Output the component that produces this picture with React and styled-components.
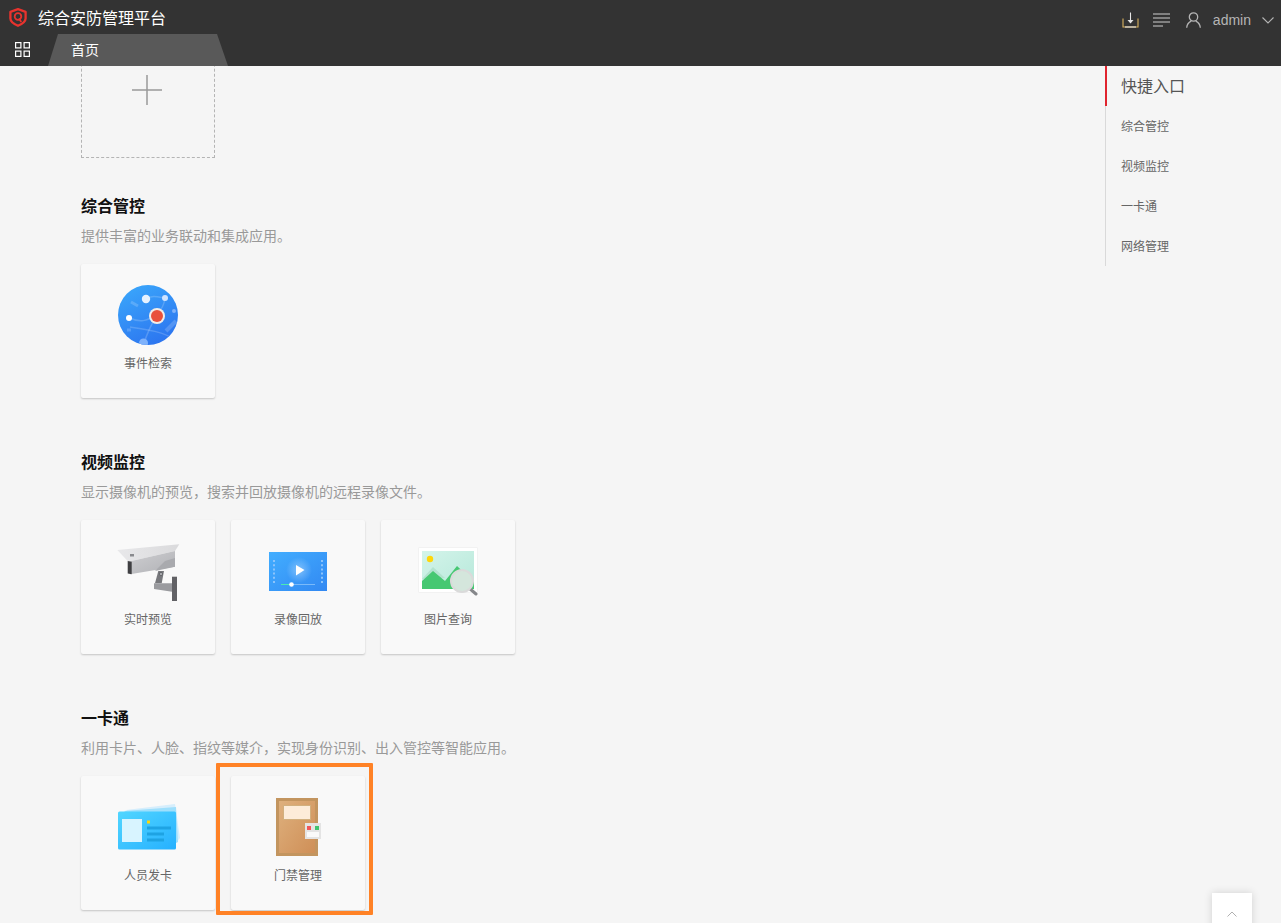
import React from "react";
import styled, { createGlobalStyle } from "styled-components";

const GlobalStyle = createGlobalStyle`
    html, body {
        margin: 0;
        height: 100%;
        overflow: hidden;
        background: #f5f5f5;
    }
    body {
        font-family: "Liberation Sans", "Noto Sans CJK SC", sans-serif;
    }
    * {
        box-sizing: border-box;
    }
`;

function BrandIcon() {
    return (
        <svg width="18" height="19" viewBox="0 0 18 19">
            <path
                d="M9 1.200 16.600 3.800V10.500C16.600 13.800 13 16 9 17.800 5 16 1.400 13.800 1.400 10.500V3.800Z"
                fill="none"
                stroke="#e8332e"
                strokeWidth="2.300"
                strokeLinejoin="round"
            />
            <circle cx="9" cy="8.500" r="3.300" fill="none" stroke="#e8332e" strokeWidth="1.800" />
            <path d="M10 10.500 12.300 14" stroke="#e8332e" strokeWidth="1.800" />
        </svg>
    );
}

function GridIcon() {
    return (
        <svg width="15" height="15" viewBox="0 0 15 15" fill="none" stroke="#fff" strokeWidth="1.200">
            <rect x=".6" y=".6" width="5.300" height="5.300" />
            <rect x="9.100" y=".6" width="5.300" height="5.300" />
            <rect x=".6" y="9.100" width="5.300" height="5.300" />
            <rect x="9.100" y="9.100" width="5.300" height="5.300" />
        </svg>
    );
}

function DownloadIcon() {
    return (
        <svg width="17" height="16" viewBox="0 0 17 16" fill="none">
            <path d="M1 6.500V15H16V6.500" stroke="#d9b25f" strokeWidth="1.100" />
            <path d="M3 15H14" stroke="#e6e6e6" strokeWidth="1.100" />
            <path d="M8.500 .5V10.500" stroke="#e6e6e6" strokeWidth="1.100" />
            <path d="M5.500 8 8.500 11.500 11.500 8Z" fill="#e6e6e6" />
        </svg>
    );
}

function ListIcon() {
    return (
        <svg width="17" height="14" viewBox="0 0 17 14" stroke="#cfcfcf" strokeWidth="1">
            <path d="M0 1H17" />
            <path d="M0 5H17" />
            <path d="M0 9H17" />
            <path d="M0 13H10" />
        </svg>
    );
}

function UserIcon() {
    return (
        <svg width="15" height="16" viewBox="0 0 15 16" fill="none" stroke="#b5b5b5" strokeWidth="1.300">
            <circle cx="7.500" cy="5" r="4.200" />
            <path d="M.7 15.800C1 12 3.500 10 5.200 9.200M14.300 15.800C14 12 11.500 10 9.800 9.200" />
        </svg>
    );
}

function ChevronIcon() {
    return (
        <svg width="12" height="7" viewBox="0 0 12 7" fill="none" stroke="#b5b5b5" strokeWidth="1.100">
            <path d="M.5 .5 6 6 11.500 .5" />
        </svg>
    );
}

function EventIcon() {
    return (
        <svg width="60" height="60" viewBox="0 0 60 60">
            <defs>
                <linearGradient id="eventBlue" x1="0.2" y1="0" x2="0.7" y2="1">
                    <stop offset="0" stopColor="#3aa6fb" />
                    <stop offset="1" stopColor="#2c74ef" />
                </linearGradient>
                <clipPath id="eventClip">
                    <circle cx="30" cy="30" r="30" />
                </clipPath>
            </defs>
            <circle cx="30" cy="30" r="30" fill="url(#eventBlue)" />
            <g clipPath="url(#eventClip)" fill="none" stroke="#fff" strokeOpacity=".18" strokeWidth="1.500">
                <path d="M12 33C22 38 28 36 39 30" />
                <path d="M28 14C34 10 40 12 47 13" />
                <path d="M47 13C46 22 42 26 39 30 34 38 30 46 26 58" />
                <path d="M12 42C26 44 44 46 60 56" />
                <path d="M13 17 20 21" strokeWidth="3" />
                <path d="M48 46 58 36" strokeWidth="4" />
                <path d="M9 45H13" strokeWidth="3" />
            </g>
            <g clipPath="url(#eventClip)">
                <circle cx="28" cy="14" r="4.200" fill="#e6f2ff" />
                <circle cx="47" cy="13" r="3" fill="#cfe3ff" />
                <circle cx="11" cy="33" r="3" fill="#fff" />
                <circle cx="56" cy="26" r="2" fill="#7fb2fb" />
                <circle cx="25.500" cy="58" r="4.500" fill="#7fb2fb" />
                <circle cx="39" cy="31" r="8" fill="#f1ece8" />
                <circle cx="39" cy="31" r="6" fill="#e8503c" />
            </g>
        </svg>
    );
}

function CameraIcon() {
    return (
        <svg width="66" height="62" viewBox="-2 -3 66 62">
            <defs>
                <linearGradient id="camBody" x1="0" y1="0" x2="1" y2="1">
                    <stop offset="0" stopColor="#cfcfd2" />
                    <stop offset="1" stopColor="#b0b1b5" />
                </linearGradient>
                <linearGradient id="camHood" x1="0" y1="0" x2="1" y2="0">
                    <stop offset="0" stopColor="#e8e8ea" />
                    <stop offset="1" stopColor="#dadadc" />
                </linearGradient>
            </defs>
            <path d="M.3 7 62.300 1.300 58 8 11.300 18.700Z" fill="url(#camHood)" />
            <path d="M11.300 18.700 58 8V23.700L13 31.300Z" fill="url(#camBody)" />
            <path d="M10.700 18 14.700 18.700V31.300L10.700 30.500Z" fill="#3f3f42" />
            <path d="M38 28 48 18 58 15V23.700Z" fill="#a9aaae" />
            <path d="M41.300 28H47L44.700 40.300H38Z" fill="#77787c" />
            <path d="M37 40.300H55V48.700L37 46Z" fill="#9a9b9f" />
            <rect x="55" y="33.700" width="5" height="24.300" fill="#616165" />
            <circle cx="44" cy="31" r="1.600" fill="#b0b1b5" stroke="#55565a" strokeWidth=".7" />
            <rect x="13" y="11" width="4" height="2.500" fill="#8a8b8f" />
        </svg>
    );
}

function VideoIcon() {
    return (
        <svg width="58" height="39" viewBox="0 0 58 39">
            <defs>
                <linearGradient id="videoBlue" x1="0" y1="0" x2="1" y2="1">
                    <stop offset="0" stopColor="#42aeff" />
                    <stop offset="1" stopColor="#3288f2" />
                </linearGradient>
                <radialGradient id="videoGlow">
                    <stop offset="0" stopColor="#fff" stopOpacity=".35" />
                    <stop offset="1" stopColor="#fff" stopOpacity="0" />
                </radialGradient>
            </defs>
            <rect width="58" height="39" fill="url(#videoBlue)" />
            <circle cx="30" cy="18" r="13" fill="url(#videoGlow)" />
            <path d="M27 13 35.500 18 27 23.500Z" fill="#fff" />
            <path d="M5 8V32M53 8V32" stroke="#8cc4fb" strokeWidth="2" strokeDasharray="2 2.200" />
            <path d="M12 32.500H46" stroke="#8cc4fb" strokeWidth=".8" />
            <path d="M12 32.500H22" stroke="#3cf5a0" strokeWidth=".8" />
            <circle cx="22.500" cy="32.500" r="2.300" fill="#fff" />
        </svg>
    );
}

function PictureIcon() {
    return (
        <svg width="60" height="50" viewBox="-1 -2 60 50">
            <defs>
                <linearGradient id="picSky" x1="0" y1="0" x2="1" y2="1">
                    <stop offset="0" stopColor="#d3f4ea" />
                    <stop offset="1" stopColor="#b7e8da" />
                </linearGradient>
            </defs>
            <rect x="-.5" y="-.5" width="59" height="45" fill="#ececec" />
            <rect x="0" y="0" width="58" height="44" fill="#fff" />
            <rect x="3" y="3" width="52" height="38" fill="url(#picSky)" />
            <circle cx="11" cy="11" r="3.200" fill="#ffd60a" />
            <path d="M3 31 14 19 26 30Z" fill="#b3e3cf" />
            <path d="M3 41V33L14 23 26 33 38 18 55 34V41Z" fill="#46c872" />
            <path d="M50 40 57 46" stroke="#85878a" strokeWidth="3" strokeLinecap="round" />
            <circle cx="43" cy="33" r="11" fill="#d4e6dc" stroke="#dadada" strokeWidth="2" />
        </svg>
    );
}

function CardIcon() {
    return (
        <svg width="66" height="47" viewBox="-3 0 66 47">
            <defs>
                <linearGradient id="cardBlue" x1="0" y1="0" x2="1" y2="1">
                    <stop offset="0" stopColor="#52d6ff" />
                    <stop offset="1" stopColor="#25b0ff" />
                </linearGradient>
            </defs>
            <path d="M8 6 57 0 62 34 57 40Z" fill="#d6eefc" />
            <path d="M6 7 58 3 60 38 56 40Z" fill="#9edffc" />
            <rect x="0" y="7.500" width="58" height="38" rx="1.500" fill="url(#cardBlue)" />
            <rect x="4" y="15" width="20" height="23" fill="#d8f4ff" />
            <rect x="29" y="16.500" width="3" height="3" fill="#ffd60a" />
            <rect x="29" y="22.500" width="24" height="3" fill="#1ea3e3" />
            <rect x="29" y="28.500" width="17" height="3" fill="#1ea3e3" />
            <rect x="29" y="34.500" width="17" height="3" fill="#1ea3e3" />
        </svg>
    );
}

function DoorIcon() {
    return (
        <svg width="46" height="58" viewBox="-1 0 46 58">
            <defs>
                <linearGradient id="doorWood" x1="0" y1="0" x2="1" y2="1">
                    <stop offset="0" stopColor="#deb07d" />
                    <stop offset="1" stopColor="#cf8f57" />
                </linearGradient>
            </defs>
            <rect x="0" y="0" width="42" height="58" fill="#c3955f" />
            <rect x="3" y="3" width="36" height="52" fill="url(#doorWood)" />
            <rect x="7" y="7" width="28" height="15" fill="#d2b07e" />
            <rect x="8" y="8" width="26" height="13" fill="#fdecd9" />
            <rect x="29" y="25" width="16" height="16" fill="#e4e4e4" />
            <rect x="31" y="28" width="4" height="4" fill="#f0565a" />
            <rect x="39" y="28" width="4" height="4" fill="#3fc46f" />
            <rect x="31" y="34" width="12" height="5" fill="#fafafa" />
        </svg>
    );
}

function AddIcon() {
    return (
        <svg width="30" height="30" viewBox="0 0 30 30" stroke="#999" strokeWidth="1.500">
            <path d="M15 0V30M0 15H30" />
        </svg>
    );
}

const sections = [
    {
        title: "综合管控",
        desc: "提供丰富的业务联动和集成应用。",
        apps: [{ name: "事件检索", icon: <EventIcon /> }],
    },
    {
        title: "视频监控",
        desc: "显示摄像机的预览\uFF0C搜索并回放摄像机的远程录像文件。",
        apps: [
            { name: "实时预览", icon: <CameraIcon /> },
            { name: "录像回放", icon: <VideoIcon /> },
            { name: "图片查询", icon: <PictureIcon /> },
        ],
    },
    {
        title: "一卡通",
        desc: "利用卡片、人脸、指纹等媒介\uFF0C实现身份识别、出入管控等智能应用。",
        apps: [
            { name: "人员发卡", icon: <CardIcon /> },
            { name: "门禁管理", icon: <DoorIcon />, marked: true },
        ],
    },
];

const quickLinks = ["综合管控", "视频监控", "一卡通", "网络管理"];

export default function App() {
    return (
        <Shell>
            <GlobalStyle />
            <Header>
                <TopRow>
                    <Brand>
                        <BrandIcon />
                        <BrandName>综合安防管理平台</BrandName>
                    </Brand>
                    <Tools>
                        <DownloadIcon />
                        <ListIcon />
                        <UserSlot>
                            <UserIcon />
                        </UserSlot>
                        <UserName>admin</UserName>
                        <ChevronIcon />
                    </Tools>
                </TopRow>
                <TabRow>
                    <MenuButton>
                        <GridIcon />
                    </MenuButton>
                    <Tab>首页</Tab>
                </TabRow>
            </Header>
            <Main>
                <Content>
                    <AddCard>
                        <AddIcon />
                    </AddCard>
                    {sections.map((section) => (
                        <Section key={section.title}>
                            <SectionTitle>{section.title}</SectionTitle>
                            <SectionDesc>{section.desc}</SectionDesc>
                            <CardRow>
                                {section.apps.map((app) => (
                                    <AppCard key={app.name}>
                                        <IconSlot>{app.icon}</IconSlot>
                                        <AppName>{app.name}</AppName>
                                        {app.marked && <Marker />}
                                    </AppCard>
                                ))}
                            </CardRow>
                        </Section>
                    ))}
                </Content>
                <QuickNav>
                    <QuickItem $active>快捷入口</QuickItem>
                    {quickLinks.map((link) => (
                        <QuickItem key={link}>{link}</QuickItem>
                    ))}
                </QuickNav>
                <BackTop>
                    <svg width="10" height="6" viewBox="0 0 10 6" fill="none" stroke="#b0b0b0" strokeWidth="1">
                        <path d="M.5 5.500 5 1 9.500 5.500" />
                    </svg>
                </BackTop>
            </Main>
        </Shell>
    );
}

const Shell = styled.div`
    display: flex;
    flex-direction: column;
    height: 100vh;
    overflow: hidden;
`;

const Header = styled.header`
    position: relative;
    z-index: 2;
    flex: none;
    height: 66px;
    background: #333333;
`;

const TopRow = styled.div`
    display: flex;
    align-items: center;
    justify-content: space-between;
    height: 34px;
    padding: 0 7px 0 9px;
`;

const Brand = styled.div`
    display: flex;
    align-items: center;
    gap: 11px;
`;

const BrandName = styled.span`
    color: #fff;
    font-size: 16px;
`;

const Tools = styled.div`
    display: flex;
    align-items: center;
    gap: 14px;
    padding-top: 6px;
`;

const UserSlot = styled.div`
    display: flex;
    margin-left: 2px;
`;

const UserName = styled.span`
    margin-left: -2px;
    margin-right: -3px;
    color: #b5b5b5;
    font-size: 14px;
`;

const TabRow = styled.div`
    display: flex;
    height: 32px;
`;

const MenuButton = styled.div`
    display: flex;
    align-items: center;
    justify-content: center;
    width: 45px;
    padding-bottom: 1px;
`;

const Tab = styled.div`
    width: 180px;
    margin-left: 3px;
    padding-left: 23px;
    color: #fff;
    font-size: 14px;
    line-height: 32px;
    background: #595959;
    clip-path: polygon(10px 0, 169px 0, 100% 100%, 0 100%);
`;

const Main = styled.main`
    position: relative;
    flex: 1;
    min-height: 0;
    overflow: hidden;
`;

const Content = styled.div`
    margin-top: -43px;
    padding-left: 81px;
`;

const AddCard = styled.div`
    display: flex;
    align-items: center;
    justify-content: center;
    width: 134px;
    height: 135px;
    padding: 0 2px 2px 0;
    border: 1px dashed #b4b4b4;
`;

const Section = styled.section`
    margin-top: 39px;
    height: 217px;
`;

const SectionTitle = styled.h2`
    margin: 0;
    color: #111;
    font-size: 16px;
    font-weight: 700;
    line-height: 20px;
`;

const SectionDesc = styled.p`
    margin: 9px 0 0;
    color: #999;
    font-size: 14px;
    line-height: 20px;
`;

const CardRow = styled.div`
    display: flex;
    gap: 16px;
    margin-top: 18px;
`;

const AppCard = styled.div`
    position: relative;
    display: flex;
    flex-direction: column;
    align-items: center;
    width: 134px;
    height: 134px;
    background: #f9f9f9;
    border-radius: 2px;
    box-shadow: 0 1px 2px rgba(0, 0, 0, 0.2);
`;

const IconSlot = styled.div`
    display: flex;
    align-items: center;
    justify-content: center;
    height: 62px;
    margin-top: 20px;
`;

const AppName = styled.div`
    margin-top: 8px;
    color: #666;
    font-size: 12px;
    line-height: 20px;
`;

const Marker = styled.div`
    position: absolute;
    top: -13px;
    left: -15px;
    width: 157px;
    height: 152px;
    border: 4px solid #ff8226;
    border-radius: 1px;
`;

const QuickNav = styled.nav`
    position: absolute;
    top: 0;
    left: 1105px;
    width: 120px;
    border-left: 1px solid #d9d9d9;
`;

const QuickItem = styled.div`
    height: 40px;
    margin-left: -1px;
    padding-left: 14px;
    border-left: 2px solid ${(p) => (p.$active ? "#e0242e" : "transparent")};
    color: ${(p) => (p.$active ? "#555" : "#666")};
    font-size: ${(p) => (p.$active ? "16px" : "12px")};
    line-height: 42px;
`;

const BackTop = styled.div`
    position: absolute;
    top: 827px;
    left: 1212px;
    display: flex;
    justify-content: center;
    width: 40px;
    height: 40px;
    padding-top: 18px;
    background: #fff;
    box-shadow: 0 0 8px rgba(0, 0, 0, 0.15);
`;
